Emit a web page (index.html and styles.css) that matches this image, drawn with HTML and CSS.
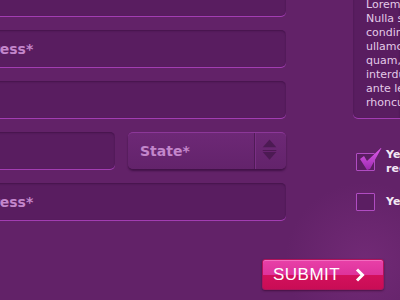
FILE: index.html
```html
<!DOCTYPE html>
<html lang="en">
<head>
    <meta charset="UTF-8">
    <meta name="viewport" content="width=device-width, initial-scale=1.0">
    <title>Contact form</title>

    <link rel="stylesheet" href="styles.css">
</head>
<body>
    <div class="page">
        <div class="top">
            <div class="form-col">
                <div class="field"></div>
                <div class="field"><span class="label">Address*</span></div>
                <div class="field"></div>
                <div class="row">
                    <div class="field city"></div>
                    <div class="select">
                        <span class="label">State*</span>
                        <span class="arrows">
                            <svg width="32" height="36" viewBox="0 0 32 36">
                                <polygon points="8,14 22,14 15,6" fill="#4c1a53"/>
                                <line x1="8" y1="17.5" x2="22" y2="17.5" stroke="#4c1a53" stroke-width="1"/>
                                <polygon points="8,19 22,19 15,27" fill="#4c1a53"/>
                            </svg>
                        </span>
                    </div>
                </div>
                <div class="field"><span class="label">Address*</span></div>
            </div>

            <div class="side-col">
                <div class="textarea">
                    Lorem ipsum dolor sit amet<br>
                    Nulla sit amet nisl<br>
                    condimentum lacus<br>
                    ullamcorper tempor<br>
                    quam, et pulvinar<br>
                    interdum sed nulla<br>
                    ante lectus vitae<br>
                    rhoncus eget massa
                </div>

                <div class="check-row">
                    <span class="checkbox checked">
                        <svg class="tick" width="28" height="24" viewBox="0 0 28 24">
                            <defs>
                                <linearGradient id="tk" x1="0" y1="0" x2="0" y2="1">
                                    <stop offset="0" stop-color="#e35ef0"/>
                                    <stop offset="1" stop-color="#9b2aae"/>
                                </linearGradient>
                            </defs>
                            <polygon points="3,11 7,8 10,13 25,-1 13,21 10,22" fill="url(#tk)"/>
                        </svg>
                    </span>
                    <span class="check-text">Yes, sign me up for<br>regular updates</span>
                </div>
                <div class="check-row">
                    <span class="checkbox"></span>
                    <span class="check-text">Yes, send me offers</span>
                </div>
            </div>
        </div>

        <div class="actions">
            <button class="submit">SUBMIT
                <svg width="10" height="14" viewBox="0 0 10 14">
                    <polyline points="2,1.5 7.5,7 2,12.5" fill="none" stroke="#fff" stroke-width="3"/>
                </svg>
            </button>
        </div>
    </div>
</body>
</html>
```

FILE: styles.css
```css
* {
    margin: 0;
    padding: 0;
    box-sizing: border-box;
}

html, body {
    width: 400px;
    height: 300px;
    overflow: hidden;
}

body {
    background-color: #622268;
    background-image: radial-gradient(circle at 365px 262px, rgba(150, 60, 150, 0.3), rgba(98, 34, 104, 0) 80px);
    font-family: "DejaVu Sans", Verdana, sans-serif;
}

.page {
    width: 450px;
    margin-left: -50px;
    margin-top: -21px;
}

.top {
    display: flex;
}

.form-col {
    flex: none;
    width: 336px;
    display: flex;
    flex-direction: column;
    gap: 14px;
}

.field {
    height: 37px;
    border-radius: 5px;
    background-color: #591d60;
    box-shadow: inset 0 1px 2px rgba(30, 0, 35, 0.35), 0 1px 0 #a23db2;
    padding: 0 12px;
    display: flex;
    align-items: center;
}

.label {
    font-size: 14px;
    font-weight: bold;
    color: #c386cb;
}

.row {
    display: flex;
    gap: 13px;
}

.row .city {
    width: 165px;
}

.select {
    flex: 1;
    height: 37px;
    border-radius: 5px;
    border-top: 1px solid #8c3799;
    background: linear-gradient(#6d2876, #63236b);
    box-shadow: 0 2px 2px rgba(40, 5, 45, 0.55);
    display: flex;
    align-items: center;
    padding-left: 12px;
}

.select .label {
    flex: 1;
}

.select .arrows {
    width: 32px;
    height: 36px;
    border-left: 1px solid #4f1b56;
    box-shadow: inset 1px 0 0 #7a2f84;
    display: flex;
}

.side-col {
    margin-left: 67px;
    flex: 1;
    min-width: 0;
    display: flex;
    flex-direction: column;
}

.textarea {
    height: 139px;
    border-radius: 5px 0 0 5px;
    background-color: #591d60;
    box-shadow: inset 0 1px 2px rgba(30, 0, 35, 0.35), 0 1px 0 #a23db2;
    padding: 19px 0 0 13px;
    font-size: 11px;
    line-height: 14px;
    color: #e3c9e7;
    white-space: nowrap;
    overflow: hidden;
}

.check-row {
    display: flex;
    align-items: center;
    margin-left: 3px;
    margin-top: 30px;
}

.check-row + .check-row {
    margin-top: 17px;
}

.checkbox {
    position: relative;
    flex: none;
    width: 19px;
    height: 18px;
    border: 1px solid #b04cc2;
    border-radius: 1px;
    background-color: #5b1e62;
    margin-right: 11px;
}

.checkbox .tick {
    position: absolute;
    left: 0;
    top: -6px;
}

.check-text {
    font-size: 11px;
    font-weight: bold;
    line-height: 14px;
    color: #f3e8f4;
    white-space: nowrap;
}

.actions {
    display: flex;
    justify-content: flex-end;
    padding-right: 16px;
    margin-top: 39px;
}

.submit {
    width: 122px;
    height: 31px;
    border: 1px solid #b0125a;
    border-radius: 3px;
    background: linear-gradient(#e840a8 0%, #de339c 50%, #d3105c 52%, #c90d55 100%);
    box-shadow: inset 0 1px 0 #f46cc0, 0 1px 2px rgba(40, 0, 30, 0.5);
    color: #fff;
    font-family: "Liberation Sans", Arial, sans-serif;
    font-size: 17px;
    letter-spacing: 0.5px;
    text-align: left;
    padding-left: 10px;
    display: flex;
    align-items: center;
    gap: 15px;
}
```
